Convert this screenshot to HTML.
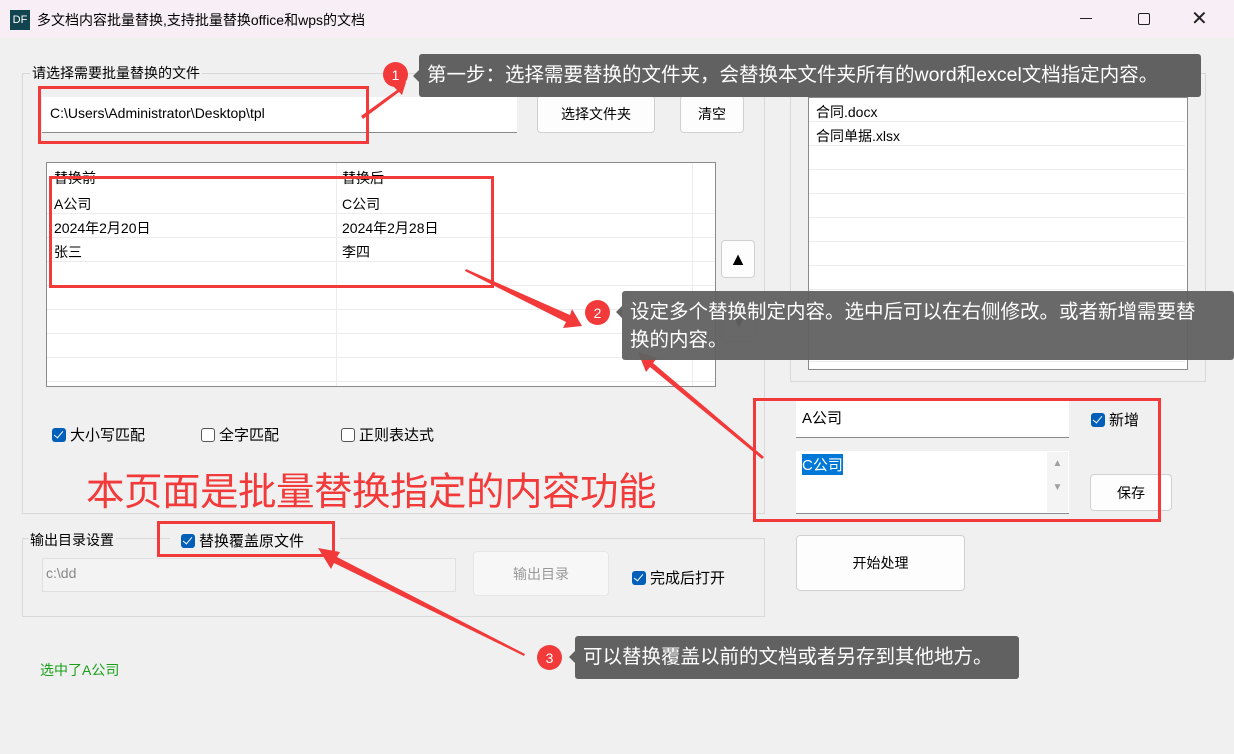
<!DOCTYPE html>
<html><head><meta charset="utf-8"><style>
*{margin:0;padding:0;box-sizing:border-box}
body{width:1234px;height:754px;background:#f0f0f0;position:relative;overflow:hidden;font-family:"Liberation Sans","Noto Sans CJK SC",sans-serif;font-size:14px;color:#000}
.a{position:absolute}
.grp{position:absolute;border:1px solid #d8d8d8}
.leg{position:absolute;background:#f0f0f0;padding:0 2px;font-size:14px}
.inp{position:absolute;background:#fff;border-bottom:1px solid #8a8a8a}
.btn{position:absolute;background:#fdfdfd;border:1px solid #d0d0d0;border-radius:4px;display:flex;align-items:center;justify-content:center;font-size:14px}
.cb{position:absolute;display:flex;align-items:center;font-size:15px}
.cb i{width:14px;height:14px;border-radius:3px;margin-right:4px;display:inline-block;position:relative}
.on{background:#005fb8}
.on:after{content:"";position:absolute;left:4px;top:1px;width:4px;height:8px;border:solid #fff;border-width:0 1.3px 1.3px 0;transform:rotate(40deg)}
.off{border:1px solid #555;background:#fff}
.rb{position:absolute;border:3px solid #f23a3a}
.tip{position:absolute;background:#616161;color:#fff;font-size:19.5px;border-radius:3px;padding:0 8px;white-space:nowrap}
.bd{position:absolute;width:25px;height:25px;border-radius:50%;background:#f23a3a;color:#fff;font-size:14px;display:flex;align-items:center;justify-content:center}
.row{position:absolute;left:0;width:668px;height:24px;border-bottom:1px solid #ececec}
</style></head><body>
<div class="a" style="left:0;top:0;width:1234px;height:38px;background:#f7eef6"></div>
<div class="a" style="left:10px;top:10px;width:20px;height:20px;background:#124450;color:#fff;font-size:11px;line-height:20px;text-align:center">DF</div>
<div class="a" style="left:37px;top:10px;font-size:14px">多文档内容批量替换,支持批量替换office和wps的文档</div>
<div class="a" style="left:1080px;top:18px;width:12px;height:1px;background:#222"></div>
<div class="a" style="left:1138px;top:13px;width:12px;height:12px;border:1.3px solid #222;border-radius:2px"></div>
<div class="a" style="left:1191px;top:6px;font-size:20px;color:#222">✕</div>

<div class="grp" style="left:22px;top:73px;width:743px;height:441px"></div>
<div class="leg" style="left:30px;top:63px">请选择需要批量替换的文件</div>
<div class="inp" style="left:42px;top:97px;width:475px;height:36px"></div>
<div class="a" style="left:50px;top:105px;font-size:14px">C:\Users\Administrator\Desktop\tpl</div>
<div class="btn" style="left:537px;top:95px;width:118px;height:38px">选择文件夹</div>
<div class="btn" style="left:680px;top:95px;width:64px;height:38px">清空</div>

<div class="a" style="left:46px;top:162px;width:670px;height:225px;background:#fff;border:1px solid #8a8a8a;overflow:hidden">
 <div class="a" style="left:289px;top:0;width:1px;height:225px;background:#ececec"></div>
 <div class="a" style="left:645px;top:0;width:1px;height:225px;background:#ececec"></div>
 <div class="a" style="left:7px;top:5px">替换前</div><div class="a" style="left:295px;top:5px">替换后</div>
 <div class="row" style="top:27px"></div><div class="row" style="top:51px"></div><div class="row" style="top:75px"></div><div class="row" style="top:99px"></div><div class="row" style="top:123px"></div><div class="row" style="top:147px"></div><div class="row" style="top:171px"></div><div class="row" style="top:195px"></div>
 <div class="a" style="left:7px;top:31px">A公司</div><div class="a" style="left:295px;top:31px">C公司</div>
 <div class="a" style="left:7px;top:55px">2024年2月20日</div><div class="a" style="left:295px;top:55px">2024年2月28日</div>
 <div class="a" style="left:7px;top:79px">张三</div><div class="a" style="left:295px;top:79px">李四</div>
</div>
<div class="btn" style="left:721px;top:240px;width:34px;height:38px;font-size:18px">▲</div>
<div class="btn" style="left:721px;top:302px;width:36px;height:40px;font-size:14px">▼</div>

<div class="cb" style="left:52px;top:424px"><i class="on"></i>大小写匹配</div>
<div class="cb" style="left:201px;top:424px"><i class="off"></i>全字匹配</div>
<div class="cb" style="left:341px;top:424px"><i class="off"></i>正则表达式</div>
<div class="a" style="left:86px;top:461px;font-size:38.5px;color:#f23a3a;letter-spacing:-0.5px">本页面是批量替换指定的内容功能</div>

<div class="grp" style="left:790px;top:73px;width:416px;height:309px"></div>
<div class="leg" style="left:800px;top:63px">相关文件(双击可编辑)</div>
<div class="a" style="left:808px;top:97px;width:380px;height:273px;background:#fff;border:1px solid #8a8a8a;overflow:hidden">
 <div class="row" style="top:0;width:376px"></div><div class="row" style="top:24px;width:376px"></div><div class="row" style="top:48px;width:376px"></div><div class="row" style="top:72px;width:376px"></div><div class="row" style="top:96px;width:376px"></div><div class="row" style="top:120px;width:376px"></div><div class="row" style="top:144px;width:376px"></div><div class="row" style="top:168px;width:376px"></div><div class="row" style="top:192px;width:376px"></div><div class="row" style="top:216px;width:376px"></div><div class="row" style="top:240px;width:376px"></div>
 <div class="a" style="left:7px;top:4px">合同.docx</div><div class="a" style="left:7px;top:28px">合同单据.xlsx</div>
</div>
<div class="inp" style="left:796px;top:401px;width:273px;height:37px"></div>
<div class="a" style="left:802px;top:407px;font-size:15px">A公司</div>
<div class="inp" style="left:796px;top:451px;width:273px;height:63px"></div>
<div class="a" style="left:1047px;top:452px;width:21px;height:60px;background:#f4f4f4;color:#a0a0a0;font-size:10px;text-align:center;line-height:24px">▲<br>▼</div>
<div class="a" style="left:802px;top:454px;font-size:15px;background:#0078d7;color:#fff">C公司</div>
<div class="cb" style="left:1091px;top:409px"><i class="on"></i>新增</div>
<div class="btn" style="left:1090px;top:474px;width:82px;height:37px">保存</div>
<div class="btn" style="left:796px;top:535px;width:169px;height:56px">开始处理</div>

<div class="grp" style="left:22px;top:538px;width:743px;height:79px"></div>
<div class="leg" style="left:28px;top:530px">输出目录设置</div>
<div class="a" style="left:170px;top:528px;width:170px;height:20px;background:#f0f0f0"></div>
<div class="cb" style="left:181px;top:530px"><i class="on"></i>替换覆盖原文件</div>
<div class="a" style="left:42px;top:558px;width:414px;height:34px;border:1px solid #e0e0e0;background:#f3f3f3;color:#888;padding:6px 3px">c:\dd</div>
<div class="btn" style="left:473px;top:551px;width:136px;height:45px;color:#999;background:#f7f7f7;border-color:#e6e6e6">输出目录</div>
<div class="cb" style="left:632px;top:567px"><i class="on"></i>完成后打开</div>
<div class="a" style="left:40px;top:660px;color:#18a018">选中了A公司</div>

<div class="rb" style="left:38px;top:86px;width:331px;height:58px"></div>
<div class="rb" style="left:49px;top:176px;width:445px;height:112px"></div>
<div class="rb" style="left:753px;top:398px;width:408px;height:124px"></div>
<div class="rb" style="left:157px;top:521px;width:178px;height:36px"></div>

<svg class="a" style="left:0;top:0" width="1234" height="754">
<g fill="#f23a3a">
<polygon points="361,116 397,90 392,85 406,82 402,95 399,92 363,119"/>
<polygon points="466,269 570,315 572,309 582,326 563,328 566,322 465,271"/>
<polygon points="762,459 650,367 646,372 638,352 657,358 653,363 764,457"/>
<polygon points="524,656 334,563 331,569 318,548 340,552 337,557 525,654"/>
</g>
</svg>

<div class="bd" style="left:383px;top:62px">1</div>
<div class="a" style="left:413px;top:70px;width:0;height:0;border:6px solid transparent;border-right-color:#616161;border-left:0"></div>
<div class="tip" style="left:419px;top:54px;width:782px;height:43px;line-height:43px">第一步：选择需要替换的文件夹，会替换本文件夹所有的word和excel文档指定内容。</div>
<div class="bd" style="left:585px;top:300px">2</div>
<div class="a" style="left:616px;top:306px;width:0;height:0;border:6px solid transparent;border-right-color:#616161;border-left:0"></div>
<div class="tip" style="left:622px;top:291px;width:612px;height:69px;line-height:28px;padding-top:7px;opacity:.95">设定多个替换制定内容。选中后可以在右侧修改。或者新增需要替<br>换的内容。</div>
<div class="bd" style="left:537px;top:645px">3</div>
<div class="a" style="left:569px;top:651px;width:0;height:0;border:6px solid transparent;border-right-color:#616161;border-left:0"></div>
<div class="tip" style="left:575px;top:636px;width:444px;height:43px;line-height:43px">可以替换覆盖以前的文档或者另存到其他地方。</div>
</body></html>
